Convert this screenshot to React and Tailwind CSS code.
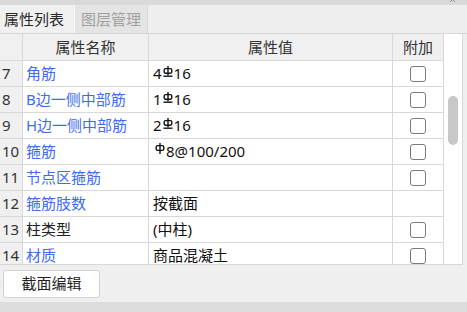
import React from "react";

const FONT = { fontFamily: '"Noto Sans", "Noto Sans CJK SC", sans-serif' };

function Rebar3() {
  return (
    <svg width="10" height="11" viewBox="0 0 10 11" className="inline-block align-baseline mx-[1px] relative top-[-2px]">
      <line x1="5" y1="0" x2="5" y2="9.5" stroke="#111" strokeWidth="1.4" />
      <rect x="1.2" y="2.6" width="7.6" height="4.6" rx="1.4" fill="none" stroke="#111" strokeWidth="1.4" />
      <line x1="0.5" y1="10.2" x2="9.5" y2="10.2" stroke="#111" strokeWidth="1.4" />
    </svg>
  );
}

function Rebar1() {
  return (
    <svg width="10" height="11" viewBox="0 0 10 11" className="inline-block align-baseline mr-[1px] relative top-[-3px]">
      <line x1="5" y1="0" x2="5" y2="11" stroke="#111" strokeWidth="1.4" />
      <rect x="1.2" y="2.6" width="7.6" height="4.8" rx="1.4" fill="none" stroke="#111" strokeWidth="1.4" />
    </svg>
  );
}

const rows = [
  { n: "7", name: "角筋", blue: true, value: <>4<Rebar3 />16</>, cb: true },
  { n: "8", name: "B边一侧中部筋", blue: true, value: <>1<Rebar3 />16</>, cb: true },
  { n: "9", name: "H边一侧中部筋", blue: true, value: <>2<Rebar3 />16</>, cb: true },
  { n: "10", name: "箍筋", blue: true, value: <><Rebar1 />8@100/200</>, cb: true, vpad: true },
  { n: "11", name: "节点区箍筋", blue: true, value: "", cb: true },
  { n: "12", name: "箍筋肢数", blue: true, value: "按截面", cb: false },
  { n: "13", name: "柱类型", blue: false, value: "(中柱)", cb: true },
  { n: "14", name: "材质", blue: true, value: "商品混凝土", cb: true },
];

function Checkbox() {
  return <div className="w-[16px] h-[16px] border border-[#7a7a7a] rounded-[3px] bg-white" />;
}

export default function App() {
  return (
    <div className="w-[467px] h-[312px] flex flex-col overflow-hidden bg-[#efefef] text-[15px] text-[#222]" style={FONT}>
      <div className="h-[5px] bg-[#d9d9d9] flex justify-end pr-[10px] overflow-hidden">
        <svg width="8" height="5" viewBox="0 0 8 5">
          <line x1="1" y1="-3" x2="6" y2="2" stroke="#888" strokeWidth="1" />
          <line x1="6" y1="-3" x2="1" y2="2" stroke="#888" strokeWidth="1" />
        </svg>
      </div>
      <div className="h-[29px] flex bg-[#eeeeee] border-b border-[#d6d6d6]">
        <div className="w-[75px] flex items-center pl-[4px] bg-[#f0f0f0] border-r border-[#fafafa] text-[#2a2a2a] leading-none">
          属性列表
        </div>
        <div className="w-[73px] flex items-center justify-center bg-[#e4e4e4] border-r border-[#d6d6d6] text-[#a0a0a0] leading-none">
          图层管理
        </div>
      </div>
      <div className="h-[231px] flex">
        <div className="w-[443px] flex flex-col border-b border-[#d8d8d8] overflow-hidden">
          <div className="h-[27px] shrink-0 flex bg-[#f0f0f0] border-b border-[#d8d8d8] text-[#333]">
            <div className="w-[23px] border-r border-[#d8d8d8]" />
            <div className="w-[126px] border-r border-[#d8d8d8] flex items-center justify-center">属性名称</div>
            <div className="w-[244px] border-r border-[#d8d8d8] flex items-center justify-center">属性值</div>
            <div className="w-[50px] flex items-center justify-center">附加</div>
          </div>
          {rows.map((r) => (
            <div key={r.n} className="h-[26px] shrink-0 flex border-b border-[#d8d8d8]">
              <div className="w-[23px] bg-[#f0f0f0] border-r border-[#d8d8d8] flex items-center pl-[2px] text-[#333]">{r.n}</div>
              <div className={`w-[126px] bg-white border-r border-[#d8d8d8] flex items-center pl-[3px] whitespace-nowrap ${r.blue ? "text-[#3d6cf0]" : "text-[#222]"}`}>
                {r.name}
              </div>
              <div className={`w-[244px] bg-white border-r border-[#d8d8d8] flex items-center whitespace-nowrap text-[#111] ${r.vpad ? "pl-[6px]" : "pl-[4px]"}`}>
                <span>{r.value}</span>
              </div>
              <div className="w-[50px] bg-white flex items-center justify-center">
                {r.cb && <Checkbox />}
              </div>
            </div>
          ))}
        </div>
        <div className="w-[20px] relative bg-white border-l border-r border-b border-[#d8d8d8]">
          <div className="absolute left-[4px] top-[62px] w-[10px] h-[49px] rounded-full bg-[#c8c8c8]" />
        </div>
        <div className="flex-1 bg-[#efefef]" />
      </div>
      <div className="h-[37px] flex items-center pl-[3px]">
        <button className="w-[97px] h-[28px] bg-white border border-[#d0d0d0] rounded-[3px] text-[#222] text-[15px]" style={FONT}>
          截面编辑
        </button>
      </div>
      <div className="h-[10px] bg-[#dcdcdc]" />
    </div>
  );
}
